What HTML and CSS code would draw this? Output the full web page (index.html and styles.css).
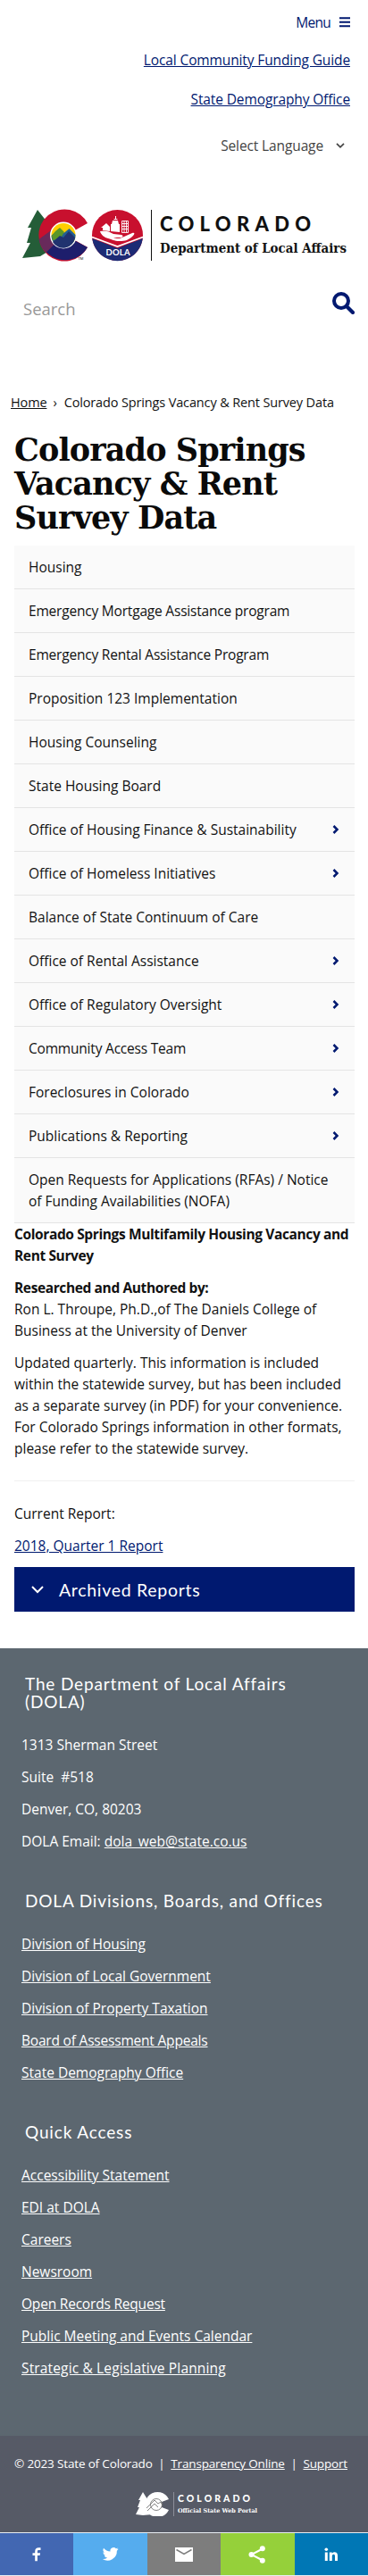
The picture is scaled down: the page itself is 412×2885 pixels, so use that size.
FILE: index.html
```html
<!DOCTYPE html>
<html lang="en">
<head>
<meta charset="utf-8">
<meta name="viewport" content="width=device-width, initial-scale=1">
<title>Colorado Springs Vacancy &amp; Rent Survey Data</title>
<link rel="stylesheet" href="styles.css">
</head>
<body>
<header class="top">
  <a class="menu">Menu
    <svg width="12" height="12" viewBox="0 0 12 12"><path d="M0 1.2h12M0 5.7h12M0 10.2h12" stroke="#001970" stroke-width="2"/></svg>
  </a>
  <a class="toplink guide" href="#">Local Community Funding Guide</a>
  <a class="toplink" href="#">State Demography Office</a>
  <div class="lang">Select Language
    <svg width="10" height="6" viewBox="0 0 10 6"><path d="M1 .8 5 4.8 9 .8" fill="none" stroke="#444" stroke-width="1.7"/></svg>
  </div>
</header>
<div class="brand">
  <svg width="388" height="60" viewBox="24 234 388 60">
    <path d="M42 235 31 255h4l-5 17h4l-9 17 20-2 15-9V258z" fill="#245d38"/>
    <path d="M98 250a29 29 0 1 0 0 27l-16-9a11 11 0 1 1 0-9z" fill="#c8102e"/>
    <path d="M48 277a29 29 0 0 0 50 0l-15-8a13 13 0 0 1-21 2l-2-9z" fill="#1d1e6c"/>
    <path d="M43.500 268a29 29 0 0 0 8 15l13-13-6-13z" fill="#682a5b"/>
    <circle cx="71" cy="263.500" r="15" fill="#fff"/>
    <circle cx="71" cy="263.500" r="13.500" fill="#ffcd00"/>
    <path d="m57.500 264 5-5 4-3 5 5 6-5 7 7a13.500 13.500 0 0 1-27 1z" fill="#236192"/>
    <path d="m58 264 4-5 5-4 5 5-5 8-8 1z" fill="#5b9728"/>
    <path d="m59 271 8-7 4 2 6-7 7 7a13.500 13.500 0 0 1-25 5z" fill="#20336f"/>
    <text x="87.500" y="291" class="tm">TM</text>
    <circle cx="131.500" cy="263.500" r="28.500" fill="#c8102e"/>
    <path d="M103.200 267l28.300 11 28.300-11a28.500 28.500 0 0 1-56.600 0z" fill="#1d2b75"/>
    <path d="M103 265.500l28.500 10.500 28.500-10.500" fill="none" stroke="#fff" stroke-width="1.700"/>
    <path d="M112 259c7-1 10 0 15 3l9 1c3 1 1 3-1 3h-8c5 2 8 1 12-1l9-4c3-1 3 1 1 3-5 5-9 6-15 6-7 0-8-2-13-3-4-1-8-4-9-8z" fill="#fff"/>
    <path d="M113 255l6-5 4 4v5l-8-1v-3zM124 251h10v9l-10-1zM126 247h6l1 4h-8zM127 246a3 3 0 0 1 5 0zM129 242h1v3h-1z" fill="#fff"/>
    <path d="M136.500 247.500h7v13h-7zM136.500 250.500h7M136.500 253.500h7M136.500 256.500h7M139 247v13M141.500 247v13" fill="none" stroke="#fff" stroke-width=".9"/>
    <text x="118.500" y="286" class="dola" textLength="27">DOLA</text>
    <path d="M169.500 235v57" stroke="#111" stroke-width="1"/>
    <text x="179" y="259" class="logo-state" textLength="169">COLORADO</text>
    <text x="179" y="283" class="logo-dept" textLength="209" lengthAdjust="spacingAndGlyphs">Department of Local Affairs</text>
  </svg>
</div>
<div class="search">
  <span class="search-hint">Search</span>
  <svg width="25" height="25" viewBox="0 0 25 25"><circle cx="10" cy="10" r="8" fill="none" stroke="#001970" stroke-width="4"/><path d="M16 16l7 7" stroke="#001970" stroke-width="4.200" stroke-linecap="round"/></svg>
</div>
<nav class="crumbs"><a href="#">Home</a><span class="sep">›</span><span>Colorado Springs Vacancy &amp; Rent Survey Data</span></nav>
<main class="main">
  <h1 class="title">Colorado Springs<br>Vacancy &amp; Rent<br>Survey Data</h1>
  <ul class="side">
    <li>Housing</li>
    <li class="tight">Emergency Mortgage Assistance program</li>
    <li class="tight">Emergency Rental Assistance Program</li>
    <li>Proposition 123 Implementation</li>
    <li>Housing Counseling</li>
    <li>State Housing Board</li>
    <li class="more">Office of Housing Finance &amp; Sustainability<svg class="chev" viewBox="0 0 8 10"><path d="M1.500 1 5.500 5l-4 4"/></svg></li>
    <li class="more">Office of Homeless Initiatives<svg class="chev" viewBox="0 0 8 10"><path d="M1.500 1 5.500 5l-4 4"/></svg></li>
    <li>Balance of State Continuum of Care</li>
    <li class="more">Office of Rental Assistance<svg class="chev" viewBox="0 0 8 10"><path d="M1.500 1 5.500 5l-4 4"/></svg></li>
    <li class="more">Office of Regulatory Oversight<svg class="chev" viewBox="0 0 8 10"><path d="M1.500 1 5.500 5l-4 4"/></svg></li>
    <li class="more tight">Community Access Team<svg class="chev" viewBox="0 0 8 10"><path d="M1.500 1 5.500 5l-4 4"/></svg></li>
    <li class="more">Foreclosures in Colorado<svg class="chev" viewBox="0 0 8 10"><path d="M1.500 1 5.500 5l-4 4"/></svg></li>
    <li class="more">Publications &amp; Reporting<svg class="chev" viewBox="0 0 8 10"><path d="M1.500 1 5.500 5l-4 4"/></svg></li>
    <li>Open Requests for Applications (RFAs) / Notice<br>of Funding Availabilities (NOFA)</li>
  </ul>
  <div class="article">
    <p><b>Colorado Springs Multifamily Housing Vacancy and<br>Rent Survey</b></p>
    <p><b>Researched and Authored by:</b><br>Ron L. Throupe, Ph.D.,of The Daniels College of<br>Business at the University of Denver</p>
    <p>Updated quarterly. This information is included<br>within the statewide survey, but has been included<br>as a separate survey (in PDF) for your convenience.<br>For Colorado Springs information in other formats,<br>please refer to the statewide survey.</p>
    <hr>
    <p>Current Report:</p>
    <p><a href="#">2018, Quarter 1 Report</a></p>
  </div>
  <div class="accordion"><svg width="14" height="9" viewBox="0 0 14 9"><path d="M1 1l6 6 6-6" fill="none" stroke="#fff" stroke-width="2"/></svg>Archived Reports</div>
</main>
<footer class="foot">
  <h2>The Department of Local Affairs<br>(DOLA)</h2>
  <div class="lines">
    <p>1313 Sherman Street</p>
    <p>Suite &nbsp;#518</p>
    <p>Denver, CO, 80203</p>
    <p>DOLA Email: <a href="#">dola_web@state.co.us</a></p>
  </div>
  <h2>DOLA Divisions, Boards, and Offices</h2>
  <div class="lines">
    <p><a href="#">Division of Housing</a></p>
    <p><a href="#">Division of Local Government</a></p>
    <p><a href="#">Division of Property Taxation</a></p>
    <p class="tight"><a href="#">Board of Assessment Appeals</a></p>
    <p><a href="#">State Demography Office</a></p>
  </div>
  <h2>Quick Access</h2>
  <div class="lines">
    <p><a href="#">Accessibility Statement</a></p>
    <p><a href="#">EDI at DOLA</a></p>
    <p><a href="#">Careers</a></p>
    <p><a href="#">Newsroom</a></p>
    <p class="tight"><a href="#">Open Records Request</a></p>
    <p><a href="#">Public Meeting and Events Calendar</a></p>
    <p class="loose"><a href="#">Strategic &amp; Legislative Planning</a></p>
  </div>
</footer>
<div class="legal">
  <div class="copy"><span>© 2023 State of Colorado</span><span>|</span><a href="#">Transparency Online</a><span>|</span><a href="#">Support</a></div>
  <svg class="portal" width="150" height="28" viewBox="152 2790 150 28">
    <path d="M160 2791l-5 9h2l-3 8h2l-4 8 8 1 11-1 4-10-7-8-3 1z" fill="#fff"/>
    <path d="M189 2799a14 14 0 1 0 0 12l-8-3a5 5 0 1 1 0-6z" fill="#fff"/>
    <circle cx="175" cy="2805" r="6.500" fill="#fff" stroke="#666" stroke-width=".8"/>
    <path d="M164 2809l9-9 4 4 3-2 2 4M165 2812l8-8 4 4" fill="none" stroke="#666" stroke-width=".8"/>
    <path d="M194.500 2791v27" stroke="#8b8e99"/>
    <text x="199" y="2802" class="portal-state" textLength="81">COLORADO</text>
    <text x="199" y="2814" class="portal-sub" textLength="89" lengthAdjust="spacingAndGlyphs">Official State Web Portal</text>
  </svg>
</div>
<div class="share">
  <a class="fb"><svg width="18" height="18" viewBox="0 0 20 20"><path fill="#fff" d="M8 18v-7H5V8h3V6c0-3 2-4.500 4.500-4.500H15v3h-2c-1.500 0-2 .5-2 1.700V8h3.500l-.5 3h-3v7z"/></svg></a>
  <a class="tw"><svg width="19" height="19" viewBox="0 0 24 24"><path fill="#fff" d="M23.500 4.800c-.8.400-1.700.6-2.600.7 1-.6 1.700-1.500 2-2.500-.9.500-1.900.9-2.900 1.100a4.600 4.600 0 0 0-7.900 4.200C8.300 8.100 4.900 6.300 2.600 3.500a4.600 4.600 0 0 0 1.400 6.200c-.8 0-1.500-.2-2.100-.6a4.600 4.600 0 0 0 3.700 4.600c-.7.200-1.400.2-2.100.1a4.600 4.600 0 0 0 4.300 3.200A9.300 9.300 0 0 1 1 18.900 13.200 13.200 0 0 0 21.300 7.200c.9-.7 1.600-1.500 2.200-2.400z"/></svg></a>
  <a class="em"><svg width="20" height="18" viewBox="0 0 20 18"><path fill="#fff" d="M0 1h20v16H0z"/><path d="M1.500 3.500l8.500 5 8.500-5" fill="none" stroke="#7d7d7d" stroke-width="1.500"/></svg></a>
  <a class="sh"><svg width="20" height="20" viewBox="0 0 20 20"><path d="M16 3.500 3.500 10 16 16.500" fill="none" stroke="#fff" stroke-width="2"/><g fill="#fff"><circle cx="15.800" cy="3.300" r="3"/><circle cx="3.500" cy="10" r="3"/><circle cx="15.800" cy="16.700" r="3"/></g></svg></a>
  <a class="li"><svg width="16" height="16" viewBox="0 0 16 16"><g fill="#fff"><circle cx="2.300" cy="2.300" r="1.800"/><path d="M.8 5.500h3V15h-3zM5.800 5.500h2.900v1.300c1.500-2.300 6.300-2.200 6.300 2.200v6h-3v-5.200c0-3-3.200-2.500-3.200 0V15h-3z"/></g></svg></a>
</div>
</body>
</html>
```
FILE: styles.css
```css
* { box-sizing: border-box; }
body {
  margin: 0;
  background: #fff;
  color: #111;
  font: 15.5px/24px "Open Sans", "Noto Sans", sans-serif;
}
a { color: #001970; text-decoration: underline; }
b { letter-spacing: -.38px; }
p { margin: 0 0 12px; }
ul { list-style: none; margin: 0; padding: 0; }
svg { display: block; }
.tight { letter-spacing: -.2px; }
.loose { letter-spacing: .15px; }

.top { height: 232px; padding: 13px 20px 0 0; display: flex; flex-direction: column; align-items: flex-end; color: #444; letter-spacing: -.12px; }
.menu { display: flex; align-items: center; gap: 10px; text-decoration: none; margin-bottom: 18px; letter-spacing: -.7px; }
.toplink { margin-bottom: 20px; }
.lang { display: flex; align-items: center; gap: 14px; padding-right: 6px; margin-top: 8px; }

.brand { height: 62px; padding: 2px 0 0 24px; }
.tm { font: 4px "Open Sans", sans-serif; }
.dola { font: 700 9.500px Lato, sans-serif; fill: #fff; }
.logo-state { font: 900 22px Lato, sans-serif; fill: #111; }
.logo-dept { font: bold 15px "DejaVu Serif", serif; fill: #111; }

.search { height: 145px; padding: 33px 15px 0 26px; display: flex; justify-content: space-between; align-items: flex-start; }
.search-hint { padding-top: 7px; font-size: 18.500px; color: #999; }

.crumbs { height: 46px; padding-left: 12px; display: flex; font-size: 14.5px; letter-spacing: -.14px; white-space: nowrap; }
.crumbs a { color: #111; }
.sep { margin: 0 8px 0 7px; }

.main { padding: 0 15px 0 16px; height: 1361px; }
.title { margin: 0; height: 126px; font: bold 35px/38px "DejaVu Serif", serif; letter-spacing: -.9px; color: #0a0a0a; white-space: nowrap; }

.side li { padding: 12px 16px; background: #fafafa; border-bottom: 1px solid #e4e4e4; white-space: nowrap; }
.side .more { display: flex; justify-content: space-between; align-items: center; }
.chev { width: 8px; height: 10px; margin-right: 1px; fill: none; stroke: #001970; stroke-width: 2.500; }

.article { white-space: nowrap; }
.article hr { margin: 24px 0; border: 0; border-top: 1px solid #f0f0f0; }
.accordion { height: 50px; padding-left: 19px; display: flex; align-items: center; gap: 17px; background: #001970; color: #fff; font: 19.500px Lato, sans-serif; letter-spacing: .7px; }

.foot { height: 882px; padding: 30px 24px 0; background: #5c6770; color: #fff; }
.foot a, .legal a { color: #fff; }
.foot h2 { margin: 0 0 26px 4px; font: 19px/20px Lato, sans-serif; letter-spacing: .85px; white-space: nowrap; }
.foot .lines { padding-bottom: 33px; }

.legal { height: 108px; padding: 19px 16px 0; background: #565a66; color: #fff; font-size: 13.5px; letter-spacing: -.16px; }
.copy { display: flex; justify-content: space-between; padding-right: 7px; white-space: nowrap; }
.portal { margin: 19px 0 0 136px; letter-spacing: 0; }
.portal-state { font: 900 10.500px Lato, sans-serif; fill: #fff; }
.portal-sub { font: bold 6.500px "DejaVu Serif", serif; fill: #fff; }

.share { height: 49px; display: grid; grid-template-columns: repeat(5, 1fr); border: solid #e8edf2; border-width: 1px 0; }
.share a { display: flex; align-items: center; justify-content: center; }
.fb { background: #4267b2; }
.tw { background: #55acee; }
.em { background: #7d7d7d; }
.sh { background: #95d03a; }
.li { background: #0077b5; }
```
